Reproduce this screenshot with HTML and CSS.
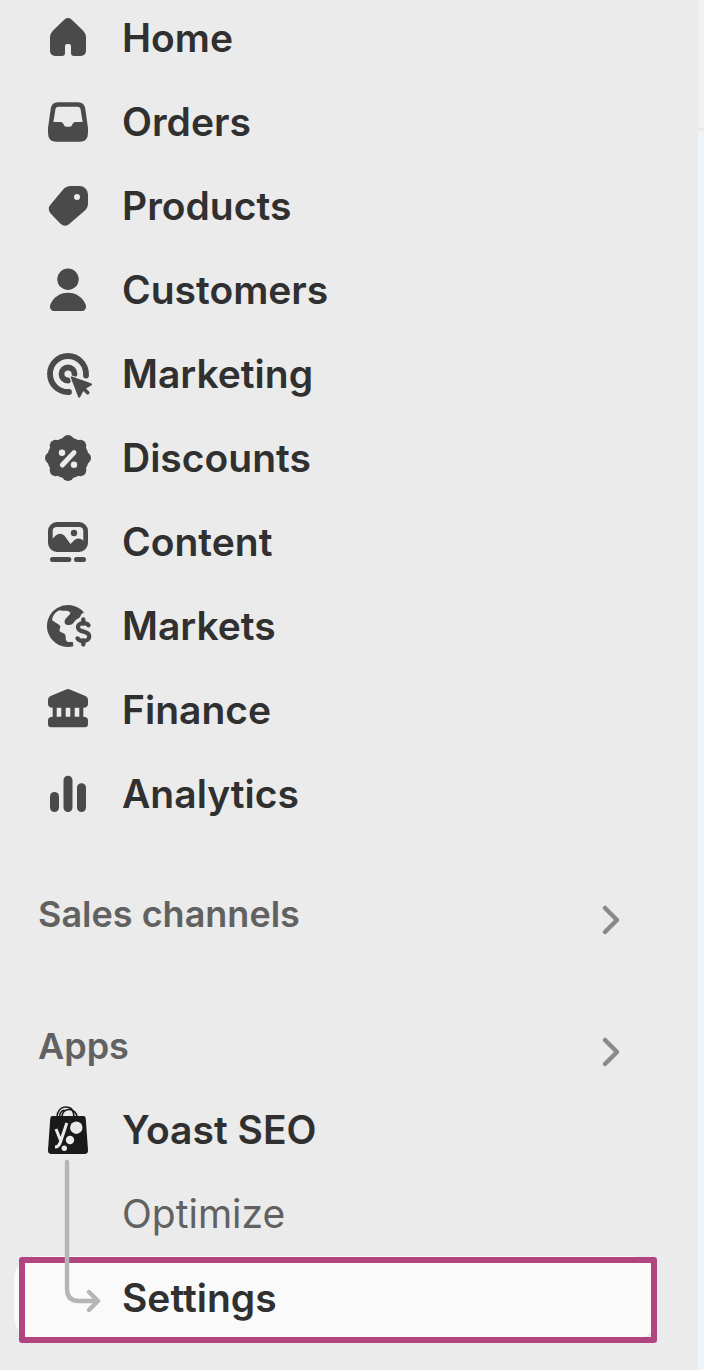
FILE: index.html
```html
<!DOCTYPE html>
<html lang="en">
<head>
<meta charset="utf-8">
<title>Settings</title>
<link rel="stylesheet" href="styles.css">
</head>
<body>
<div class="app">
<nav class="sidebar" aria-label="Main">
  <ul class="list">
    <li><a class="item" href="#home"><svg class="icon" viewBox="0 0 60 60" aria-hidden="true"><path d="M26.5 11.500a5 5 0 0 1 7 0L45 22.500q3 3 3 7V43a5 5 0 0 1-5 5h-7a3 3 0 0 1-3-3v-7q0-2-2-2h-2q-2 0-2 2v7a3 3 0 0 1-3 3h-7a5 5 0 0 1-5-5V29.500q0-4 3-7Z"/></svg>Home</a></li>
    <li><a class="item" href="#orders"><svg class="icon" viewBox="0 0 60 60" aria-hidden="true"><path fill-rule="evenodd" d="M20 10.300h20q6.300 0 7.200 6L50 36v5q0 8.700-8.500 8.700h-23Q10 49.700 10 41v-5l2.800-19.700q.9-6 7.200-6Zm.5 4.400q-2.700 0-3.100 2.700L15.400 30h7q2.600 0 3.200 2.200.7 2.500 2.900 2.500h3q2.200 0 2.900-2.500Q35 30 37.600 30h7l-2-12.600q-.4-2.700-3.100-2.700Z"/></svg>Orders</a></li>
    <li><a class="item" href="#products"><svg class="icon" viewBox="0 0 60 60" aria-hidden="true"><path fill-rule="evenodd" d="M32 10h9.500a8.500 8.500 0 0 1 8.500 8.500V28q0 3.500-2.500 6L31.300 48a6 6 0 0 1-8.500 0L12.600 37.500a6.500 6.500 0 0 1 0-9L26 12.500Q28.500 10 32 10ZM39 18a3 3 0 1 0 0 6 3 3 0 0 0 0-6Z"/></svg>Products</a></li>
    <li><a class="item" href="#customers"><svg class="icon" viewBox="0 0 60 60" aria-hidden="true"><circle cx="30" cy="19.300" r="10.700"/><path d="M30 32.700c8 0 14.500 4.500 17.500 11.500 1.500 3.500-.5 6.800-3.500 6.800H16c-3 0-5-3.300-3.500-6.800C15.500 37.200 22 32.700 30 32.700Z"/></svg>Customers</a></li>
    <li><a class="item" href="#marketing"><svg class="icon" viewBox="0 0 60 60" aria-hidden="true"><g class="stroke" stroke-width="5.800"><path d="M48 31.500V30a18 18 0 1 0-18 18h1"/><path d="M36.500 30A6.500 6.500 0 1 0 30 36.500"/></g><path class="halo" d="m32.700 32.700 21.300 7.500-6.500 4 4 4-2.800 3-4-4-3.700 6.800Z"/><path d="m34 32.500 19 6.800c1.400.5 1.400 1.500.2 2.200L48 44.400l3 3c1.700 1.700-.9 4.300-2.600 2.600l-3-3-3.200 6c-.6 1.200-1.700 1-2.100-.2L32.800 33.800c-.3-.9.300-1.600 1.200-1.300Z"/></svg>Marketing</a></li>
    <li><a class="item" href="#discounts"><svg class="icon" viewBox="0 0 60 60" aria-hidden="true"><circle cx="30" cy="30" r="20.700"/><circle cx="47" cy="30" r="6"/><circle cx="42.300" cy="42.300" r="6"/><circle cx="30" cy="47" r="6"/><circle cx="17.700" cy="42.300" r="6"/><circle cx="13" cy="30" r="6"/><circle cx="17.700" cy="17.700" r="6"/><circle cx="30" cy="13" r="6"/><circle cx="42.300" cy="17.700" r="6"/><g class="light"><circle cx="24" cy="24.700" r="3.200"/><circle cx="36" cy="36.700" r="3.200"/><path class="slash" d="M24.300 37 36 24.600"/></g></svg>Discounts</a></li>
    <li><a class="item" href="#content"><svg class="icon" viewBox="0 0 60 60" aria-hidden="true"><path fill-rule="evenodd" d="M19 10h22a9 9 0 0 1 9 9v12a9 9 0 0 1-9 9H19a9 9 0 0 1-9-9V19a9 9 0 0 1 9-9Zm0 5q-4.300 0-4.300 4v7.500l3-3q4.300-3.500 8.600 0l6.200 8.500 4-4q4.500-3 8.800.5V19q0-4-4.300-4Z"/><circle cx="36" cy="21" r="3.200"/><rect x="12" y="45" width="21.300" height="5" rx="2.500"/><rect x="36" y="45" width="12" height="5" rx="2.500"/></svg>Content</a></li>
    <li><a class="item" href="#markets"><svg class="icon" viewBox="0 0 60 60" aria-hidden="true"><path d="M46 16.500A21 21 0 1 0 35.400 50.300l-.5-4.300h-4c-2.700-.1-3.300-2-3.200-5 .1-3-2-4-5.200-5-1.400-.6-1.200-2.500 0-5.500-1.700-3-6.500-4-8.500-6.800 1-5 5-9.300 8.500-9.400 3.300 1.500 6.500-1 9.900 2.300-.3 2.800-3.800 4.500-5.200 7-1.600 3.300 0 6.100 4 5.400 5-.3 4.500-4.500 9-6.500 3.500-1.500 1.500-4.500 5.800-6Z"/><g class="stroke" stroke-width="4.300"><path d="M45.300 23.500v4.200M45.300 44.500v4"/><path d="M50.500 29.200c-1.500-2-4-2-5.500-2-3 0-5 1.700-5 4 0 6 11.200 3 11.200 9 0 3-2.300 4.800-5.500 4.800-3 0-5-.6-6.200-2.600"/></g></svg>Markets</a></li>
    <li><a class="item" href="#finance"><svg class="icon" viewBox="0 0 60 60" aria-hidden="true"><path fill-rule="evenodd" d="M28.200 9.500q1.800-.9 3.600 0l15 6.300q3.200 1.300 3.200 4.500V24q0 3.700-4.700 3.700v9q4.700 0 4.700 3.500V44q0 3.300-3.300 3.300H13.300Q10 47.300 10 44v-3.800q0-3.500 4.700-3.500v-9Q10 27.700 10 24v-3.700q0-3.200 3.200-4.500ZM18.700 27.700v9h4.600v-9Zm9 0v9h4.600v-9Zm9 0v9h4.600v-9Z"/></svg>Finance</a></li>
    <li><a class="item" href="#analytics"><svg class="icon" viewBox="0 0 60 60" aria-hidden="true"><rect x="12" y="28" width="9" height="20" rx="4.500"/><rect x="25.500" y="11.700" width="9" height="36.300" rx="4.500"/><rect x="39" y="19.300" width="9" height="28.700" rx="4.500"/></svg>Analytics</a></li>
  </ul>
  <section class="section">
    <button class="heading" type="button"><span class="heading-text">Sales channels</span><svg class="chevron" viewBox="0 0 24 36" aria-hidden="true"><path d="m5 6 12 12L5 30"/></svg></button>
  </section>
  <section class="section section-apps">
    <button class="heading" type="button"><span class="heading-text">Apps</span><svg class="chevron" viewBox="0 0 24 36" aria-hidden="true"><path d="m5 6 12 12L5 30"/></svg></button>
    <ul class="list tree">
      <li><a class="item" href="#yoast"><svg class="icon bag" viewBox="0 0 60 60" aria-hidden="true"><path d="M14.500 16h31q2 0 2.200 2L50 50q.2 4-3.500 4h-33Q9.800 54 10 50l2.300-32q.2-2 2.200-2Z"/><path class="handle" d="M19 17c0-6 4-10 8.500-10 3 0 5.500 1 7 3M24 17c0-4.500 3-7.500 7-7.500s8 3 8 7.500M21.500 17c0-3 1.500-6 5-7M34 10c1.500 2 2 4 2 7"/><circle class="light" cx="38.300" cy="27.700" r="6.200"/><circle class="light" cx="32" cy="40" r="4.200"/><circle class="light" cx="26.300" cy="48.300" r="2.700"/><path class="mark" d="m18 29 4.800 12M28.800 23l-6 18q-1.800 6-5.800 6"/></svg>Yoast SEO</a></li>
      <li><a class="item sub" href="#optimize">Optimize</a></li>
      <li><a class="item sub current" href="#settings" aria-current="page">Settings</a></li>
      <li class="branch" aria-hidden="true"><svg viewBox="0 0 40 160"><path d="M5 7v127q0 12 12 12h19M27 137l9 9-9 9"/></svg></li>
    </ul>
  </section>
</nav>
<main class="page"></main>
</div>
</body>
</html>
```
FILE: styles.css
```css
* { box-sizing: border-box; }

body {
  margin: 0;
  background: #ebebeb;
  color: #303030;
  font-family: Inter, "Liberation Sans", sans-serif;
  font-size: 39px;
  line-height: 48px;
}

.app { display: flex; min-height: 100vh; overflow: hidden; }

.sidebar { flex: 1; padding: 0 41px 28px 14px; margin-top: -4px; }

.list { list-style: none; margin: 0; padding: 0; }

.item {
  display: flex;
  align-items: center;
  gap: 24px;
  height: 84px;
  padding: 0 24px;
  border-radius: 24px;
  color: #303030;
  font-weight: 570;
  text-decoration: none;
}

.icon { width: 60px; height: 60px; flex: none; fill: #4a4a4a; overflow: visible; }
.icon .stroke { fill: none; stroke: #4a4a4a; stroke-linecap: round; stroke-linejoin: round; }
.icon .halo { fill: #ebebeb; stroke: #ebebeb; stroke-width: 3; stroke-linejoin: round; }
.icon .light { fill: #ebebeb; }
.icon .slash { stroke: #ebebeb; stroke-width: 5; stroke-linecap: round; }
.bag { fill: #1a1a1a; }
.bag .handle { fill: none; stroke: #1a1a1a; stroke-width: 1.5; }
.bag .mark { fill: none; stroke: #ebebeb; stroke-width: 3; }

.section { margin-top: 48px; }
.section-apps { margin-top: 60px; }

.heading {
  display: flex;
  align-items: center;
  justify-content: space-between;
  width: 100%;
  height: 72px;
  padding: 0 33px 0 24px;
  border: 0;
  background: none;
  color: #616161;
  font: 600 36px/44px Inter, "Liberation Sans", sans-serif;
}
.heading-text { padding-bottom: 12px; }

.chevron { width: 24px; height: 36px; fill: none; stroke: #8a8a8a; stroke-width: 4.5; stroke-linecap: round; stroke-linejoin: round; }

.tree { position: relative; }
.sub { padding-left: 108px; color: #616161; font-weight: 420; }

.current { position: relative; background: #fafafa; color: #303030; font-weight: 630; }
.current::after {
  content: "";
  position: absolute;
  inset: 1px 0 -3px 5px;
  border: 6px solid #b1457f;
  border-radius: 3px;
}

.branch { position: absolute; top: 67px; left: 48px; width: 40px; height: 160px; pointer-events: none; }
.branch svg { display: block; fill: none; stroke: #b5b5b5; stroke-width: 4.4; stroke-linecap: round; stroke-linejoin: round; }

.page {
  flex: none;
  width: 6px;
  background: linear-gradient(#f1f1f1 0 128px, #e9e9e9 128px 131px, #eff4f9 131px);
}
```
